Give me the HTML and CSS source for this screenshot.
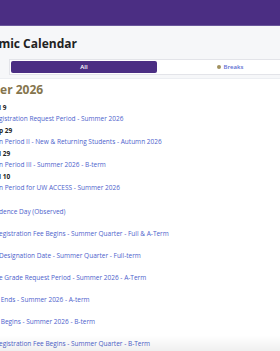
FILE: index.html
```html
<!DOCTYPE html>
<html lang="en">
<head>
  <meta charset="UTF-8">
  <meta name="viewport" content="width=device-width, initial-scale=1.0">
  <title>Academic Calendar</title>
  <link rel="stylesheet" href="styles.css">
</head>
<body>
  <div class="topbar"></div>

  <section class="intro">
    <div class="content">
      <h1 class="page-title">Academic Calendar</h1>
      <div class="filters">
        <button class="filter active">All</button>
        <button class="filter"><span class="dot"></span>Breaks</button>
      </div>
    </div>
  </section>

  <section class="content">
    <h2 class="term">Summer 2026</h2>
    <ul class="events">
      <li class="event">
        <span class="date">l 9</span>
        <a href="#">gistration Request Period - Summer 2026</a>
      </li>
      <li class="event">
        <span class="date">p 29</span>
        <a href="#">n Period II - New &amp; Returning Students - Autumn 2026</a>
      </li>
      <li class="event">
        <span class="date">l 29</span>
        <a href="#">n Period III - Summer 2026 - B-term</a>
      </li>
      <li class="event">
        <span class="date">l 10</span>
        <a href="#">n Period for UW ACCESS - Summer 2026</a>
      </li>
      <li class="event no-date"><a href="#">dence Day (Observed)</a></li>
      <li class="event no-date"><a href="#">egistration Fee Begins - Summer Quarter - Full &amp; A-Term</a></li>
      <li class="event no-date"><a href="#">Designation Date - Summer Quarter - Full-term</a></li>
      <li class="event no-date"><a href="#">e Grade Request Period - Summer 2026 - A-Term</a></li>
      <li class="event no-date"><a href="#">&nbsp;Ends - Summer 2026 - A-term</a></li>
      <li class="event no-date"><a href="#">&nbsp;Begins - Summer 2026 - B-term</a></li>
      <li class="event no-date"><a href="#">egistration Fee Begins - Summer Quarter - B-Term</a></li>
    </ul>
  </section>

  <div class="bottom-fade"></div>
</body>
</html>
```

FILE: styles.css
```css
body {
  margin: 0;
  font-family: "Open Sans", Arial, sans-serif;
  color: #222;
  background-color: #fff;
  overflow: hidden;
}

.topbar {
  height: 25px;
  background-color: #4b2e83;
  border-bottom: 1px solid #6a579b;
}

.intro {
  background-color: #f6f7f9;
  padding: 10px 0 3px;
  border-bottom: 1px solid #eceef2;
}

.content {
  margin-left: -38px;
}

.page-title {
  margin: 0;
  font-size: 12px;
  line-height: 16px;
  font-weight: 700;
  color: #222;
  white-space: nowrap;
}

.filters {
  display: flex;
  margin: 7px 0 0 47px;
  width: 600px;
  padding: 1px;
  background-color: #fff;
  border: 1px solid #e3e4e9;
}

.filter {
  width: 146px;
  height: 12px;
  padding: 0;
  border: none;
  border-radius: 2px;
  background: none;
  font-family: inherit;
  font-size: 6px;
  font-weight: 600;
  line-height: 12px;
  color: #5d6ed2;
  display: flex;
  align-items: center;
  justify-content: center;
  gap: 3px;
}

.filter.active {
  background-color: #4b2e83;
  color: #fff;
}

.dot {
  width: 4px;
  height: 4px;
  border-radius: 50%;
  background-color: #a1915f;
}

.term {
  margin: 3px 0 0;
  font-size: 12px;
  line-height: 16px;
  font-weight: 700;
  color: #85754d;
}

.events {
  list-style: none;
  margin: 5px 0 0;
  padding: 0 0 0 37px;
}

.event {
  display: flex;
  flex-direction: column;
  margin-bottom: 2px;
  white-space: nowrap;
}

.event.no-date {
  padding-top: 11px;
  margin-bottom: 0;
}

.date {
  font-size: 6.5px;
  line-height: 10px;
  font-weight: 700;
  color: #222;
}

.event a {
  font-size: 6.5px;
  line-height: 11px;
  color: #4d62cc;
  text-decoration: none;
}

.bottom-fade {
  position: fixed;
  left: 0;
  right: 0;
  bottom: 0;
  height: 16px;
  background: linear-gradient(rgba(0, 0, 0, 0), rgba(0, 0, 0, 0.06));
}
```
